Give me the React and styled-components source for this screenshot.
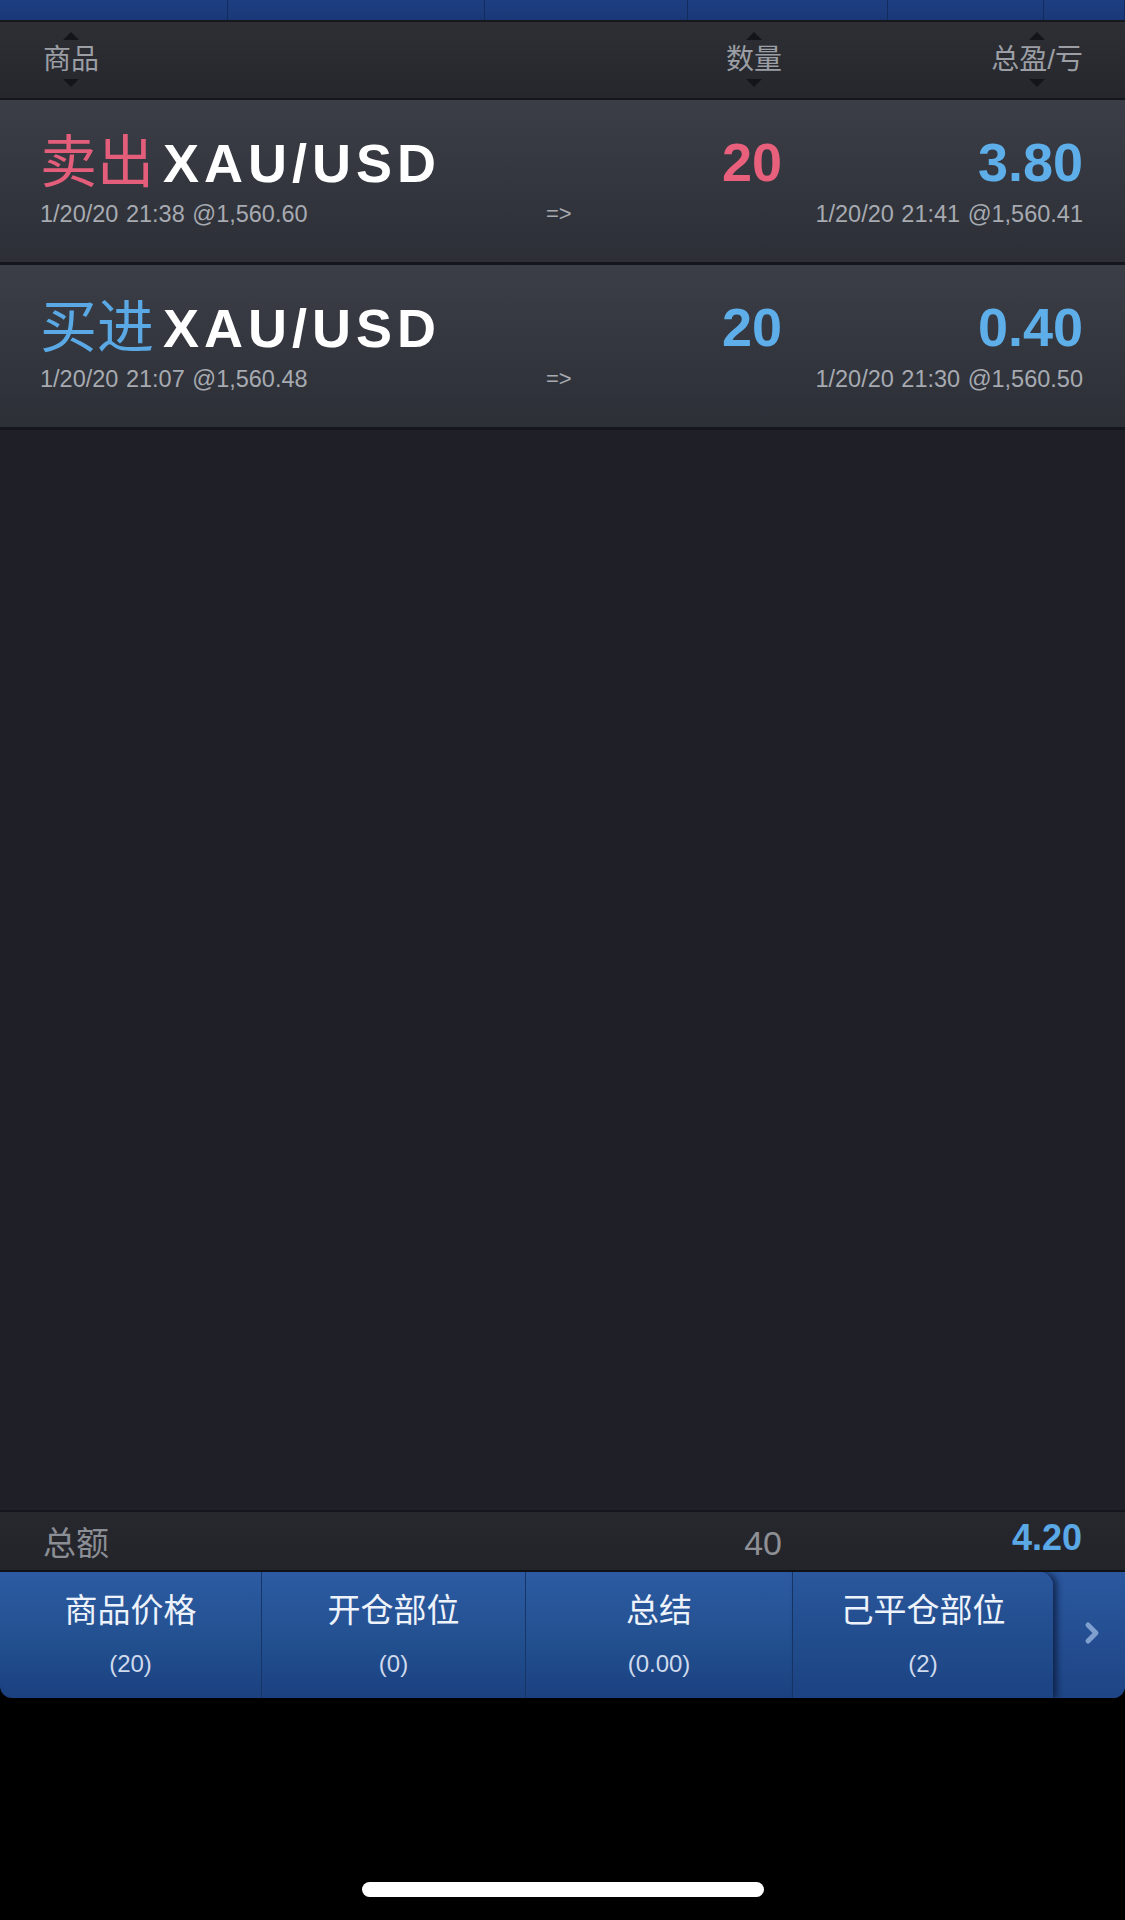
import React from "react";
import styled, { createGlobalStyle } from "styled-components";

const GlobalStyle = createGlobalStyle`
    body {
        margin: 0;
        background: #000;
        font-family: "Liberation Sans", "Noto Sans CJK SC", sans-serif;
    }
`;

const Screen = styled.div`
    width: 1125px;
    height: 1920px;
    display: flex;
    flex-direction: column;
    background: #000;
    overflow: hidden;
`;

const TopStrip = styled.div`
    display: flex;
    height: 20px;
    border-bottom: 2px solid #16181d;
`;

const StripCell = styled.div`
    width: ${p => p.w}px;
    flex-shrink: 0;
    background: linear-gradient(#1d3f82, #1a3877);
    border-right: 1px solid #132c60;
    box-sizing: border-box;
`;

const Grid = styled.div`
    display: grid;
    grid-template-columns: 1fr 240px 301px;
    padding: 0 42px 0 40px;
    box-sizing: border-box;
`;

const Header = styled(Grid)`
    height: 78px;
    align-items: center;
    background: linear-gradient(#2d2f35, #25272c);
    border-bottom: 2px solid #16171c;
    color: #9b9ea4;
    font-size: 28px;
`;

const HeadCell = styled.div`
    justify-self: ${p => (p.right ? "end" : "start")};
    padding-left: ${p => (p.right ? 0 : 3)}px;
`;

const SortLabel = styled.span`
    position: relative;
    display: inline-block;
    line-height: 30px;
    &::before, &::after {
        content: "";
        position: absolute;
        left: 50%;
        transform: translateX(-50%);
        border-left: 8px solid transparent;
        border-right: 8px solid transparent;
    }
    &::before {
        top: -13px;
        border-bottom: 8px solid #14151a;
    }
    &::after {
        bottom: -12px;
        border-top: 8px solid #14151a;
    }
`;

const Row = styled(Grid)`
    height: 165px;
    padding-top: 32px;
    grid-template-rows: 60px 28px;
    row-gap: 8px;
    align-content: start;
    background: linear-gradient(#3b3e46, #2c2f36);
    border-bottom: 3px solid #15161b;
`;

const Title = styled.div`
    display: flex;
    align-items: baseline;
    line-height: 60px;
    white-space: nowrap;
`;

const Side = styled.span`
    font-size: 57px;
    color: ${p => p.color};
    margin-right: 9px;
`;

const Symbol = styled.span`
    font-size: 54px;
    font-weight: bold;
    color: #fff;
    letter-spacing: 5px;
`;

const BigNum = styled.div`
    justify-self: end;
    font-size: 54px;
    font-weight: bold;
    line-height: 60px;
    color: ${p => p.color};
`;

const Stamp = styled.div`
    justify-self: ${p => (p.right ? "end" : "start")};
    font-size: 23.5px;
    line-height: 28px;
    color: #a7aab1;
    white-space: nowrap;
    word-spacing: 1px;
`;

const Arrow = styled.div`
    font-size: 22px;
    line-height: 28px;
    color: #a7aab1;
    padding-left: 4px;
`;

const Body = styled.div`
    flex: 1;
    background: #1e1f27;
    border-bottom: 2px solid #15161b;
`;

const Total = styled(Grid)`
    height: 60px;
    align-items: center;
    background: linear-gradient(#27282e, #232429);
    border-bottom: 2px solid #111216;
`;

const TotalLabel = styled.div`
    font-size: 33px;
    color: #8b8e95;
    padding-left: 3px;
`;

const TotalNum = styled.div`
    justify-self: end;
    font-size: ${p => (p.bold ? 36 : 34)}px;
    font-weight: ${p => (p.bold ? "bold" : "normal")};
    color: ${p => p.color};
    margin-right: ${p => (p.bold ? 1 : 0)}px;
    margin-top: ${p => (p.bold ? -6 : 4)}px;
`;

const TabBar = styled.div`
    display: flex;
    height: 126px;
    background: linear-gradient(#2d5ba3, #22508f 55%, #1b4080);
    border-radius: 0 0 12px 12px;
    overflow: hidden;
`;

const Tab = styled.div`
    width: ${p => p.w}px;
    flex-shrink: 0;
    box-sizing: border-box;
    display: flex;
    flex-direction: column;
    align-items: center;
    padding-top: 22px;
    border-right: 1px solid #173567;
    ${p => p.active && `
        background: linear-gradient(#2a579d, #214c8c 55%, #1c4383);
        border-right: none;
        border-radius: 0 14px 0 0;
        box-shadow: 4px 0 6px rgba(8, 20, 50, 0.7);
        position: relative;
        z-index: 1;
    `}
`;

const TabLabel = styled.div`
    font-size: 33px;
    line-height: 34px;
    color: #eef3fb;
`;

const TabCount = styled.div`
    font-size: 24px;
    line-height: 26px;
    margin-top: 23px;
    color: #cfdaec;
`;

const More = styled.div`
    flex: 1;
    display: flex;
    align-items: center;
    justify-content: center;
    padding-left: 6px;
    padding-bottom: 4px;
    background: linear-gradient(#2b589f, #1e4585);
`;

const HomeBar = styled.div`
    width: 402px;
    height: 15px;
    border-radius: 8px;
    background: #fff;
    margin: 184px auto 23px;
`;

const strip = [228, 257, 203, 200, 156, 81];

const trades = [
    {
        side: "卖出", sideColor: "#e45e7b", qty: 20, qtyColor: "#e8607c", pnl: "3.80",
        open: "1/20/20 21:38 @1,560.60", close: "1/20/20 21:41 @1,560.41",
    },
    {
        side: "买进", sideColor: "#5aa8e4", qty: 20, qtyColor: "#5eaeea", pnl: "0.40",
        open: "1/20/20 21:07 @1,560.48", close: "1/20/20 21:30 @1,560.50",
    },
];

const tabs = [
    { label: "商品价格", count: "(20)", w: 262 },
    { label: "开仓部位", count: "(0)", w: 264 },
    { label: "总结", count: "(0.00)", w: 267 },
    { label: "己平仓部位", count: "(2)", w: 260, active: true },
];

const TradeRow = ({ t }) => (
    <Row>
        <Title>
            <Side color={t.sideColor}>{t.side}</Side>
            <Symbol>XAU/USD</Symbol>
        </Title>
        <BigNum color={t.qtyColor}>{t.qty}</BigNum>
        <BigNum color="#5eaeea">{t.pnl}</BigNum>
        <Stamp>{t.open}</Stamp>
        <Arrow>=&gt;</Arrow>
        <Stamp right>{t.close}</Stamp>
    </Row>
);

export default function App() {
    return (
        <Screen>
            <GlobalStyle />
            <TopStrip>
                {strip.map((w, i) => <StripCell key={i} w={w} />)}
            </TopStrip>
            <Header>
                <HeadCell><SortLabel>商品</SortLabel></HeadCell>
                <HeadCell right><SortLabel>数量</SortLabel></HeadCell>
                <HeadCell right><SortLabel>总盈/亏</SortLabel></HeadCell>
            </Header>
            {trades.map((t, i) => <TradeRow key={i} t={t} />)}
            <Body />
            <Total>
                <TotalLabel>总额</TotalLabel>
                <TotalNum color="#8e9096">40</TotalNum>
                <TotalNum bold color="#5aa9e6">4.20</TotalNum>
            </Total>
            <TabBar>
                {tabs.map(tab => (
                    <Tab key={tab.label} w={tab.w} active={tab.active}>
                        <TabLabel>{tab.label}</TabLabel>
                        <TabCount>{tab.count}</TabCount>
                    </Tab>
                ))}
                <More>
                    <svg width="16" height="24" viewBox="0 0 16 24">
                        <path d="M4 4 L12 12 L4 20" fill="none" stroke="#7f9fcf" strokeWidth="5" strokeLinecap="round" strokeLinejoin="round" />
                    </svg>
                </More>
            </TabBar>
            <HomeBar />
        </Screen>
    );
}
